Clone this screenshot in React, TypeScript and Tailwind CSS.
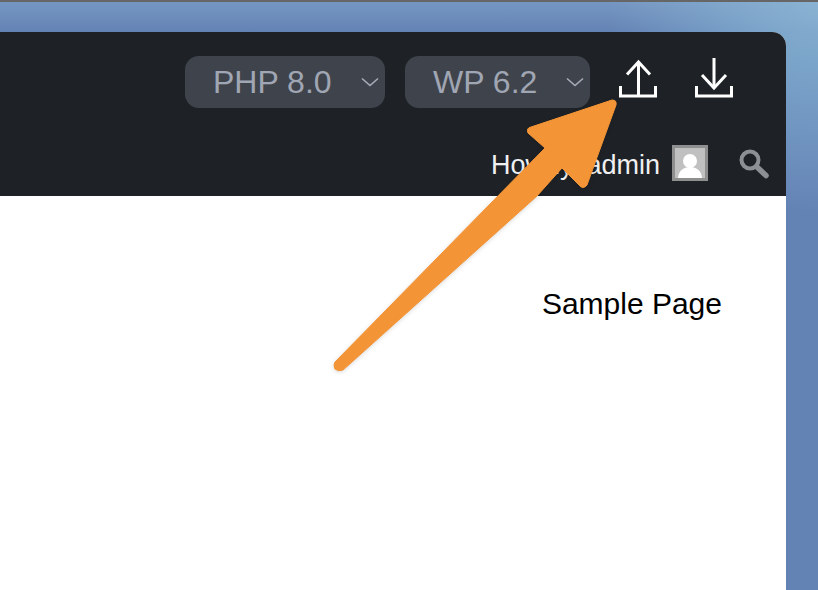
import React from 'react';

const font = "font-['Liberation_Sans',Arial,sans-serif]";

const Chevron: React.FC = () => (
  <svg width="18" height="10" viewBox="0 0 18 10" fill="none" className="shrink-0">
    <path d="M1 1.5 L9 8.5 L17 1.5" stroke="#a7adb8" strokeWidth="1.6" />
  </svg>
);

const VersionPill: React.FC<{ label: string; className: string }> = ({ label, className }) => (
  <div className={`h-[52px] rounded-[14px] bg-[#3f444c] flex items-center justify-between text-[32px] text-[#a0a6b3] ${className}`}>
    <span>{label}</span>
    <Chevron />
  </div>
);

const UploadIcon: React.FC = () => (
  <svg width="40" height="40" viewBox="0 0 40 40" fill="none" stroke="#fff" strokeWidth="3">
    <path d="M2.5 28 V38 H37.5 V28" />
    <path d="M20.5 38 V4" />
    <path d="M9 16.5 L20.5 4 L32 16.5" />
  </svg>
);

const DownloadIcon: React.FC = () => (
  <svg width="40" height="40" viewBox="0 0 40 40" fill="none" stroke="#fff" strokeWidth="3">
    <path d="M2.5 28 V38 H37.5 V28" />
    <path d="M20 0 V30" />
    <path d="M8 17 L20 30 L32 17" />
  </svg>
);

const Avatar: React.FC = () => (
  <div className="w-9 h-9 bg-[#c0c0c0] border-[3px] border-[#8f8f8f] overflow-hidden">
    <svg width="30" height="30" viewBox="0 0 30 30" fill="#fff">
      <circle cx="15" cy="13" r="7" />
      <path d="M3 30 C3.5 23 8 19 15 19 C22 19 26.5 23 27 30 Z" />
    </svg>
  </div>
);

const SearchIcon: React.FC = () => (
  <svg width="31" height="31" viewBox="0 0 31 31" fill="none" stroke="#8c8f94">
    <circle cx="11" cy="12" r="8.5" strokeWidth="4" />
    <path d="M18.5 19.5 L27 27.5" strokeWidth="5.5" strokeLinecap="round" />
  </svg>
);

export default function App() {
  return (
    <div className={`${font} relative w-[818px] h-[590px] overflow-hidden border-t-2 border-[#666] pt-[30px] bg-[linear-gradient(to_bottom,rgba(150,185,215,0.35),rgba(150,185,215,0)_30px),radial-gradient(circle_at_100%_0%,#84aecf_0%,#7aa3c9_70px,#6483b5_210px,#6483b5_100%)]`}>
      <div className="w-[786px] h-[558px] rounded-tr-[14px] overflow-hidden bg-white flex flex-col">
        <header className="h-[164px] bg-[#1e2227] flex flex-col items-end">
          <div className="h-[52px] mt-6 flex items-center">
            <VersionPill label="PHP 8.0" className="w-[200px] pl-[28px] pr-[6px]" />
            <VersionPill label="WP 6.2" className="w-[185px] ml-5 pl-7 pr-[6px]" />
            <div className="ml-7 mr-[52px] mb-2 flex items-center gap-9">
              <UploadIcon />
              <DownloadIcon />
            </div>
          </div>
          <div className="mt-[37px] mr-[16px] flex items-center text-[27px] text-[#f0f0f1]">
            <span>Howdy, admin</span>
            <span className="ml-3 -mt-1"><Avatar /></span>
            <span className="ml-[31px] -mt-1"><SearchIcon /></span>
          </div>
        </header>
        <main className="flex-1 flex justify-end pr-[64px] pt-[90px]">
          <a className="text-[30px] leading-[36px] text-black">Sample Page</a>
        </main>
      </div>
      <svg className="absolute left-0 top-[-2px] drop-shadow-[0_1px_2px_rgba(0,0,0,0.15)]" width="818" height="590" viewBox="0 0 818 590">
        <path
          d="M335 362 L545 148 L528 133 Q526 128 531 127 L612 100 Q617 100 616 105 L587 185 Q583 190 579 185 L562 168 L537 196 L343 370 Q338 372 335 369 Q333 365 335 362 Z"
          fill="#f39436"
          stroke="#f39436"
          strokeWidth="1"
          strokeLinejoin="round"
        />
      </svg>
    </div>
  );
}
